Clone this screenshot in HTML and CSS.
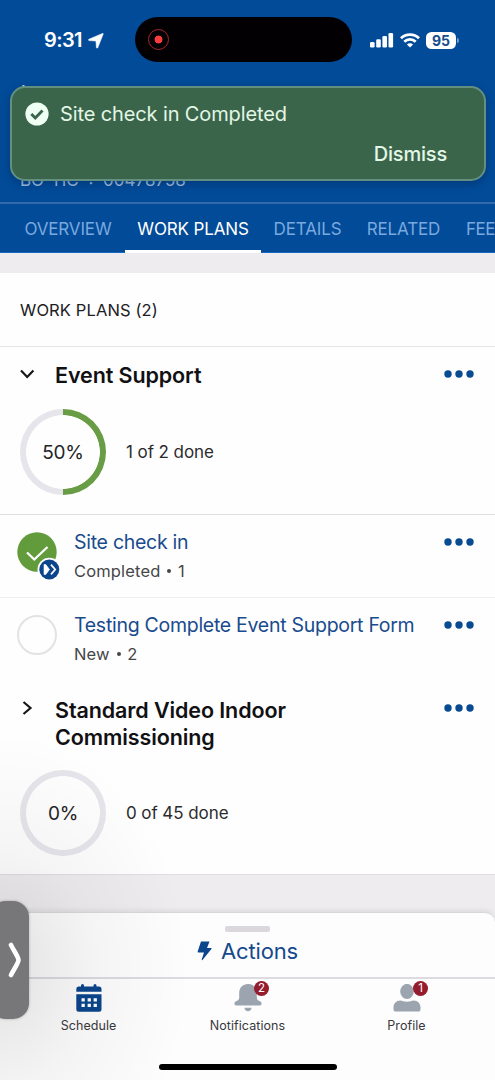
FILE: index.html
```html
<!DOCTYPE html>
<html lang="en">
<head>
<meta charset="utf-8">
<title>Work Plans</title>
<link rel="stylesheet" href="styles.css">
</head>
<body>
<div class="phone">
  <header class="header">
    <div class="status">
      <div class="clock"><span>9:31</span>
        <svg width="16" height="16" viewBox="0 0 16 16"><path d="M15.200 1 9.800 14.600c-.3.800-1.300.700-1.400-.1L8 8 1.300 7.600C.4 7.500.2 6.500 1 6.200L14.500.5c.6-.2.900.1.700.500Z" fill="#fff" stroke="#fff" stroke-width=".6" stroke-linejoin="round"/></svg>
      </div>
      <div class="island"><span class="rec"></span></div>
      <div class="signals">
        <svg width="24" height="16" viewBox="0 0 24 16" fill="#fff"><rect x="0" y="10" width="4.600" height="5.500" rx="1.300"/><rect x="6.200" y="7.300" width="4.600" height="8.200" rx="1.300"/><rect x="12.400" y="4" width="4.600" height="11.500" rx="1.300"/><rect x="18.500" y="1" width="4.600" height="14.500" rx="1.300"/></svg>
        <svg class="wifi" width="20" height="15" viewBox="0 0 20 15" fill="none" stroke="#fff" stroke-width="2.800"><path d="M1 5.300a12.700 12.700 0 0 1 18 0"/><path d="M4.300 8.800a8.100 8.100 0 0 1 11.400 0"/><path d="M10 14.600 6.900 11.500a4.400 4.400 0 0 1 6.200 0Z" fill="#fff" stroke="none"/></svg>
        <span class="battery">95</span><span class="cap"></span>
      </div>
    </div>
    <div class="record"><span class="back"></span><span class="ticket">BO-TIC : 00478758</span></div>
    <nav class="tabs">
      <a class="tab t1">OVERVIEW</a><a class="tab t2 active">WORK PLANS</a><a class="tab t3">DETAILS</a><a class="tab t4">RELATED</a><a class="tab t5">FEE</a>
    </nav>
  </header>

  <main class="content">
    <h2 class="list-title">WORK PLANS (2)</h2>
    <section class="plan">
      <div class="plan-head">
        <svg class="chev" width="18" height="18" viewBox="0 0 18 18"><path d="m3 5.500 6.200 6.500 6.200-6.500"/></svg>
        <h3 class="name-a">Event Support</h3>
        <svg class="dots" width="30" height="8" viewBox="0 0 30 8"><circle cx="4" cy="4" r="3.700"/><circle cx="15" cy="4" r="3.700"/><circle cx="26" cy="4" r="3.700"/></svg>
      </div>
      <div class="progress">
        <div class="ring half"><span>50%</span></div><span class="done">1 of 2 done</span>
      </div>
    </section>
    <section class="task first">
      <div class="state">
        <svg width="44" height="50" viewBox="0 0 44 50"><circle cx="20" cy="20" r="19.700" fill="#629b3b"/><path d="m10 20.500 7.300 7L30.500 15" fill="none" stroke="#fff" stroke-width="2.300"/><circle cx="32.300" cy="37.500" r="11.800" fill="#fff"/><circle cx="32.300" cy="37.500" r="10" fill="#0b458c"/><path d="M27 32.500h1.800l3.700 5-3.700 5H27Z" fill="#fff" stroke="#fff" stroke-width=".6"/><path d="m34 32.600 4.200 4.900-4.200 4.900" fill="none" stroke="#fff" stroke-width="1.700"/></svg>
      </div>
      <div class="task-text"><a class="task-name n1">Site check in</a><span class="sub s1">Completed <i></i> 1</span></div>
      <svg class="dots" width="30" height="8" viewBox="0 0 30 8"><circle cx="4" cy="4" r="3.700"/><circle cx="15" cy="4" r="3.700"/><circle cx="26" cy="4" r="3.700"/></svg>
    </section>
    <section class="task">
      <div class="state"><span class="empty"></span></div>
      <div class="task-text"><a class="task-name n2">Testing Complete Event Support Form</a><span class="sub s2">New <i></i> 2</span></div>
      <svg class="dots" width="30" height="8" viewBox="0 0 30 8"><circle cx="4" cy="4" r="3.700"/><circle cx="15" cy="4" r="3.700"/><circle cx="26" cy="4" r="3.700"/></svg>
    </section>
    <section class="plan second">
      <div class="plan-head">
        <svg class="chev" width="18" height="18" viewBox="0 0 18 18"><path d="m5.500 3 7 6-7 6"/></svg>
        <h3 class="name-b">Standard Video Indoor<br>Commissioning</h3>
        <svg class="dots" width="30" height="8" viewBox="0 0 30 8"><circle cx="4" cy="4" r="3.700"/><circle cx="15" cy="4" r="3.700"/><circle cx="26" cy="4" r="3.700"/></svg>
      </div>
      <div class="progress">
        <div class="ring"><span>0%</span></div><span class="done">0 of 45 done</span>
      </div>
    </section>
  </main>

  <section class="sheet">
    <span class="grip"></span>
    <div class="actions">
      <svg width="15" height="20" viewBox="0 0 15 20"><path d="M4 .5h8.500L10 7h4c.5 0 .7.500.4.900L5.500 19c-.4.500-1 .1-.8-.5L7 11.500H1.200c-.5 0-.7-.4-.6-.8Z" fill="#0b458c"/></svg>
      <span>Actions</span>
    </div>
  </section>
  <nav class="bottom">
    <a class="item i1">
      <svg width="26" height="28" viewBox="0 0 26 28"><path d="M2.500 2.500H5V1.500a1.500 1.500 0 0 1 3 0v1h9.500v-1a1.500 1.500 0 0 1 3 0v1h2.500a2.500 2.500 0 0 1 2.500 2.500v2.700H.3V5a2.400 2.400 0 0 1 2.200-2.500Z" fill="#0b458c"/><path d="M.3 10.200h25.200v15a2.500 2.500 0 0 1-2.500 2.500H2.800a2.500 2.500 0 0 1-2.500-2.500Z" fill="#0b458c"/><path d="M5.500 14.200h3.300v3.300H5.500zm6.100 0h3.300v3.300h-3.300zm6 0h3.300v3.300h-3.300zM5.500 19.800h3.300v3.300H5.500zm6.100 0h3.300v3.300h-3.300zm6 0h3.300v3.300h-3.300z" fill="#fff"/></svg>
      <span>Schedule</span>
    </a>
    <a class="item i2">
      <svg width="28" height="28" viewBox="0 0 28 28" fill="#9ca5af"><path d="M14 0c5.300 0 8.800 3.800 8.800 9v4.200c0 2.500 1.200 3.500 3.500 4.200 1.800.600 1.700 4-.3 4H2c-2 0-2.100-3.400-.3-4 2.300-.7 3.500-1.700 3.500-4.200V9C5.200 3.800 8.700 0 14 0Z"/><path d="M10.500 23.800h7c0 2-1.500 3.400-3.500 3.400s-3.500-1.400-3.500-3.400Z"/></svg>
      <b class="badge">2</b><span>Notifications</span>
    </a>
    <a class="item i3">
      <svg width="28" height="28" viewBox="0 0 28 28" fill="#9ca5af"><ellipse cx="14" cy="7.500" rx="6.800" ry="7.600"/><path d="M.5 23.500c0-4 2.800-7 6.800-7 2 0 3.500 1.300 6.700 1.300s4.700-1.300 6.700-1.300c4 0 6.800 3 6.800 7v2c0 1.300-.9 2.100-2.200 2.100H2.700C1.400 27.600.5 26.800.5 25.500Z"/></svg>
      <b class="badge">1</b><span>Profile</span>
    </a>
  </nav>
  <div class="home"></div>

  <div class="shade"></div>
  <div class="drawer"><svg width="14" height="36" viewBox="0 0 14 36"><path d="M3 3c3 6 7.500 12 7.500 15S6 27 3 33" fill="none" stroke="#fff" stroke-width="4.600" stroke-linecap="round"/></svg></div>

  <aside class="toast">
    <div class="toast-line">
      <svg width="24" height="24" viewBox="0 0 24 24"><circle cx="12" cy="12" r="11.600" fill="#f0fff3"/><path d="m6.300 12 4 4 7.200-7.500" fill="none" stroke="#3b654b" stroke-width="2.900"/></svg>
      <span>Site check in Completed</span>
    </div>
    <div class="dismiss">Dismiss</div>
  </aside>
</div>
</body>
</html>
```
FILE: styles.css
```css
* { box-sizing: border-box; }
body { margin: 0; font-family: Inter, "Liberation Sans", sans-serif; }
h2, h3 { margin: 0; }
svg { display: block; flex: none; }
.phone { position: relative; width: 495px; height: 1080px; overflow: hidden; display: flex; flex-direction: column; background: #eeecef; }

.header { height: 253px; flex: none; background: #024b98; display: flex; flex-direction: column; }
.status { height: 80px; display: flex; color: #fff; }
.clock { width: 135px; padding: 28px 0 0 44px; display: flex; gap: 6px; font-size: 20px; line-height: 25px; font-weight: 600; letter-spacing: -.600px; }
.clock svg { margin-top: 5px; }
.island { width: 217px; height: 45px; margin-top: 17px; border-radius: 23px; background: #020003; padding: 12px 0 0 13px; }
.rec { display: block; width: 21px; height: 21px; border-radius: 50%; border: 1.500px solid #a9282f; background: radial-gradient(circle, #fa3c3f 0 3.600px, transparent 4.300px); }
.signals { display: flex; padding: 32px 0 0 18px; }
.wifi { margin: 1px 0 0 6px; }
.battery { width: 30px; height: 17px; margin-left: 6px; border-radius: 5.500px; background: #fff; color: #174e8c; font-weight: 700; font-size: 14px; line-height: 17px; text-align: center; }
.cap { width: 2px; height: 5px; margin: 6px 0 0 1px; border-radius: 0 2px 2px 0; background: #719cc9; }
.record { height: 124px; display: flex; flex-direction: column; justify-content: space-between; border-bottom: 2px solid #3469a9; }
.back { width: 3px; height: 3px; margin: 5px 0 0 22px; background: #d9e7f5; border-radius: 50%; }
.ticket { padding: 0 0 12px 20px; color: #a9c6e5; font-size: 17px; line-height: 20px; white-space: pre; word-spacing: 5px; }
.tabs { height: 49px; display: flex; font-size: 17px; line-height: 50px; letter-spacing: -.150px; }
.tab { height: 49px; flex: none; color: #79a9df; text-align: center; white-space: nowrap; border-bottom: 1px solid #1467bb; }
.t1 { width: 125px; padding-left: 11px; }
.t2 { width: 136px; }
.t3 { width: 93px; }
.t4 { width: 99px; }
.t5 { width: 42px; text-align: left; padding-left: 13px; letter-spacing: -.500px; }
.active { color: #fff; border-bottom: 3px solid #fff; }

.content { margin-top: 20px; height: 602px; flex: none; background: #fefefe; border-bottom: 1px solid #dfdde0; }
.list-title { height: 74px; padding-left: 20px; font-size: 16.500px; letter-spacing: .120px; font-weight: 400; line-height: 74px; color: #202023; border-bottom: 1px solid #e6e6e9; }
.plan { height: 168px; border-bottom: 1px solid #dedee1; padding-top: 15px; }
.plan-head { display: flex; align-items: flex-start; padding: 0 21px 0 18px; }
.plan-head h3 { flex: 1; padding-left: 19px; font-size: 21.500px; letter-spacing: -.100px; line-height: 27px; font-weight: 600; color: #111114; }
.chev { margin-top: 3px; fill: none; stroke: #171719; stroke-width: 2.200; }
.dots { fill: #084b91; margin-top: 8px; }
.progress { display: flex; align-items: center; padding: 20px 0 0 20px; gap: 20px; }
.ring { width: 86px; height: 86px; border-radius: 50%; background: radial-gradient(circle, #fefefe 0 36.500px, transparent 37.200px), #e5e5eb; display: flex; align-items: center; justify-content: center; font-size: 19px; letter-spacing: -.200px; color: #242427; }
.half { background: radial-gradient(circle, #fefefe 0 36.500px, transparent 37.200px), conic-gradient(#689c45 50%, #e5e5eb 0); }
.done { font-size: 17px; letter-spacing: -.080px; color: #2b2b2e; }
.task { height: 83px; display: flex; padding: 15px 21px 0 17px; }
.task.first { border-bottom: 1px solid #efeff1; }
.task .dots { margin-top: 8px; }
.state { width: 57px; padding-top: 2px; flex: none; }
.empty { display: block; width: 40px; height: 40px; border: 2px solid #e3e3e6; border-radius: 50%; }
.task-text { flex: 1; min-width: 0; display: flex; flex-direction: column; white-space: nowrap; }
.task-name { font-size: 19.500px; letter-spacing: -.280px; line-height: 25px; color: #194b8d; }
.sub { margin-top: 5px; font-size: 16.500px; line-height: 22px; letter-spacing: .150px; color: #464649; }
.sub i { display: inline-block; width: 4px; height: 4px; margin: 0 2px; border-radius: 50%; background: #464649; vertical-align: 4px; }
.second { height: 193px; border: 0; padding-top: 16px; }
.second .plan-head h3 { line-height: 26.500px; }
.second .chev { margin-top: 2px; }
.second .dots { margin-top: 7px; }

.sheet { margin-top: 37px; height: 67px; flex: none; background: #fdfdfe; border-top: 1px solid #d8d8db; border-bottom: 2px solid #dcdce0; border-radius: 10px 10px 0 0; box-shadow: 0 -2px 5px #00000012; display: flex; flex-direction: column; align-items: center; }
.grip { width: 45px; height: 6px; margin-top: 13px; border-radius: 2px; background: #dad8dd; }
.actions { display: flex; gap: 9px; margin-top: 5px; font-size: 22px; letter-spacing: -.120px; line-height: 28px; color: #15498d; }
.actions svg { margin-top: 4px; }
.bottom { height: 101px; flex: none; display: flex; justify-content: center; background: #fdfdfe; }
.item { position: relative; width: 159px; padding-top: 5px; display: flex; flex-direction: column; align-items: center; font-size: 12.500px; letter-spacing: .060px; line-height: 18px; color: #39393c; }
.item span { margin-top: 5px; }
.badge { position: absolute; left: 86px; top: 2px; width: 15px; height: 15px; border-radius: 50%; background: #941c2c; color: #fff; font-size: 11.500px; line-height: 15px; text-align: center; font-weight: 400; }
.home { position: absolute; left: 159px; top: 1064px; width: 178px; height: 6px; border-radius: 3px; background: #000; }
.shade { position: absolute; left: 0; top: 740px; width: 240px; height: 340px; background: radial-gradient(ellipse 190px 240px at 0 230px, #0000001c, #00000009 50%, transparent); }
.drawer { position: absolute; left: -10px; top: 901px; width: 39px; height: 118px; border-radius: 16px; background: #777678; padding: 41px 0 0 18px; box-shadow: 0 0 3px #0004; }

.toast { position: absolute; left: 10px; top: 86px; width: 476px; height: 95px; border: 2px solid #638f81; border-radius: 15px; background: #3b654b; color: #e3f7e6; box-shadow: 0 3px 8px #00204a66; padding: 14px 37px 0 13px; }
.toast-line { display: flex; gap: 11px; font-size: 20px; letter-spacing: -.120px; line-height: 24px; }
.dismiss { margin-top: 16px; text-align: right; font-size: 20px; letter-spacing: -.200px; line-height: 24px; font-weight: 500; }
```
